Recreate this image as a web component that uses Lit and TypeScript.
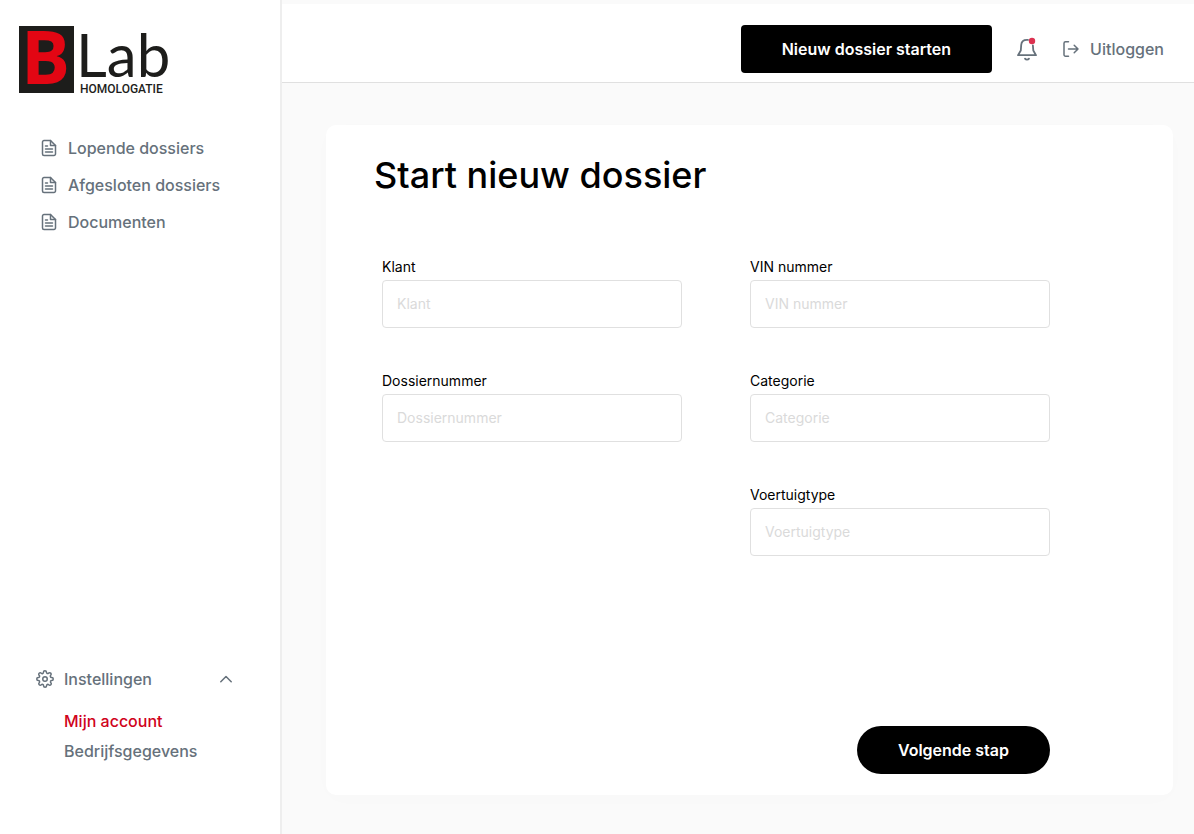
import { LitElement, html, css, svg } from "lit";
import { customElement } from "lit/decorators.js";

const documentIcon = html`<svg class="icon" width="18" height="18" viewBox="0 0 18 18" aria-hidden="true">
  <path d="M10.5 1.5H4A1.5 1.5 0 0 0 2.5 3v12A1.5 1.5 0 0 0 4 16.5h10a1.5 1.5 0 0 0 1.5-1.5V6.5z" />
  <path d="M10.5 1.5V6.5h5M5.500 7h2M5.500 10h7M5.500 13h7" />
</svg>`;

const gearTeeth = svg`<path d="M19.400 15a1.650 1.650 0 0 0 .330 1.820l.060.060a2 2 0 1 1-2.830 2.830l-.060-.060a1.650 1.650 0 0 0-2.800 1.170V21a2 2 0 1 1-4 0v-.090a1.650 1.650 0 0 0-2.900-1.180l-.060.060a2 2 0 1 1-2.830-2.830l.060-.060a1.650 1.650 0 0 0-1.170-2.800H3a2 2 0 1 1 0-4h.090a1.650 1.650 0 0 0 1.180-2.900l-.060-.060a2 2 0 1 1 2.830-2.830l.060.060a1.650 1.650 0 0 0 2.800-1.170V3a2 2 0 1 1 4 0v.090a1.650 1.650 0 0 0 2.800 1.170l.060-.060a2 2 0 1 1 2.830 2.830l-.060.060a1.650 1.650 0 0 0 1.170 2.800H21a2 2 0 1 1 0 4h-.090a1.650 1.650 0 0 0-1.510 1.110z" />`;

const links = ["Lopende dossiers", "Afgesloten dossiers", "Documenten"];

const columns = [
  ["Klant", "Dossiernummer"],
  ["VIN nummer", "Categorie", "Voertuigtype"],
];

@customElement("app-root")
export class AppRoot extends LitElement {
  static styles = css`
    :host {
      display: grid;
      grid-template-columns: 282px minmax(0, 1fr);
      min-height: 100vh;
      background: #fafafa;
      color: #000;
      font-family: Inter, "Liberation Sans", sans-serif;
      font-size: 16px;
      line-height: 24px;
    }
    * {
      box-sizing: border-box;
    }
    a {
      color: inherit;
      text-decoration: none;
    }
    button {
      border: 0;
      padding: 0;
      background: none;
      color: inherit;
      font: inherit;
      cursor: pointer;
    }
    .icon {
      flex: none;
      fill: none;
      stroke: currentColor;
      stroke-width: 1.5;
      stroke-linecap: round;
      stroke-linejoin: round;
    }
    .gear {
      stroke-width: 2;
    }
    .sidebar {
      display: flex;
      flex-direction: column;
      padding: 0 0 71px;
      border-right: 2px solid #eee;
      background: #fff;
      color: #66717b;
      font-weight: 500;
    }
    .logo {
      display: block;
      flex: none;
      overflow: visible;
    }
    .mark {
      font-family: "Open Sans", sans-serif;
      font-size: 73px;
      font-weight: 700;
      fill: #e30613;
    }
    .name {
      font-family: Lato, sans-serif;
      font-size: 60px;
      font-weight: 400;
      fill: #1d1d1b;
    }
    .tagline {
      font-family: Roboto, sans-serif;
      font-size: 12px;
      font-weight: 500;
      fill: #1d1d1b;
    }
    .links {
      display: grid;
      gap: 13px;
      margin-top: 24px;
      padding-left: 40px;
    }
    .link {
      display: flex;
      align-items: center;
      gap: 10px;
    }
    .settings {
      margin-top: auto;
      padding: 0 48px 0 36px;
    }
    .toggle {
      display: flex;
      align-items: center;
      width: 100%;
      gap: 10px;
      font-weight: 500;
    }
    .toggle-text {
      flex: 1;
      text-align: left;
    }
    .sublinks {
      display: grid;
      gap: 6px;
      padding: 18px 0 0 28px;
    }
    .active {
      color: #d0021b;
    }
    .page {
      display: flex;
      flex-direction: column;
    }
    .header {
      display: flex;
      align-items: center;
      justify-content: flex-end;
      height: 83px;
      padding: 12px 30px 0 20px;
      border-top: 4px solid #fafafa;
      border-bottom: 1px solid #e0e0e0;
      background: #fff;
      color: #66717b;
      font-weight: 500;
    }
    .primary {
      height: 48px;
      padding: 0 41px;
      border-radius: 4px;
      background: #000;
      color: #fff;
      font-weight: 600;
    }
    .bell,
    .logout {
      display: flex;
      align-items: center;
    }
    .bell {
      margin: 0 24px;
    }
    .logout {
      gap: 10px;
    }
    .badge {
      fill: #dc3250;
      stroke: none;
    }
    .card {
      flex: 1;
      display: flex;
      flex-direction: column;
      margin: 42px 21px 39px 44px;
      padding: 26px 48px 21px;
      border-radius: 10px;
      background: #fff;
      box-shadow: 0 4px 24px rgba(0, 0, 0, 0.01);
    }
    .title {
      margin: 0;
      font-size: 36px;
      line-height: 48px;
      font-weight: 500;
    }
    .form {
      flex: 1;
      display: flex;
      flex-direction: column;
      max-width: 676px;
      padding: 56px 0 0 8px;
    }
    .columns {
      display: grid;
      grid-template-columns: 1fr 1fr;
      gap: 68px;
    }
    .column {
      display: flex;
      flex-direction: column;
      gap: 41px;
    }
    .field {
      display: grid;
      gap: 1px;
    }
    .label {
      font-size: 14px;
    }
    .input {
      width: 100%;
      height: 48px;
      padding: 0 14px 2px;
      border: 1px solid #e0e0e0;
      border-radius: 4px;
      background: #fff;
      color: #000;
      font: inherit;
      font-size: 14px;
    }
    .input::placeholder {
      color: #dadada;
      opacity: 1;
    }
    .actions {
      display: flex;
      justify-content: flex-end;
      margin-top: auto;
    }
    .round {
      border-radius: 24px;
    }
  `;

  render() {
    return html`
      <aside class="sidebar">
        <svg class="logo" width="200" height="112" viewBox="0 0 200 112" role="img" aria-label="BLab Homologatie">
          <rect x="19" y="26" width="55" height="67" fill="#1d1d1b" />
          <text class="mark" x="21" y="84">B</text>
          <text class="name" x="76" y="77">Lab</text>
          <text class="tagline" x="80" y="93">HOMOLOGATIE</text>
        </svg>
        <nav class="links">
          ${links.map((text) => html`<a class="link" href="#">${documentIcon}<span>${text}</span></a>`)}
        </nav>
        <nav class="settings">
          <button class="toggle" type="button" aria-expanded="true">
            <svg class="icon gear" width="18" height="18" viewBox="0 0 24 24" aria-hidden="true">
              ${gearTeeth}<circle cx="12" cy="12" r="3" />
            </svg>
            <span class="toggle-text">Instellingen</span>
            <svg class="icon" width="12" height="8" viewBox="0 0 12 8" aria-hidden="true"><path d="M.8 6.800 6 1.500l5.200 5.300" /></svg>
          </button>
          <div class="sublinks">
            <a class="active" href="#">Mijn account</a>
            <a href="#">Bedrijfsgegevens</a>
          </div>
        </nav>
      </aside>
      <div class="page">
        <header class="header">
          <button class="primary" type="button">Nieuw dossier starten</button>
          <button class="bell" type="button" aria-label="Meldingen">
            <svg class="icon" width="22" height="24" viewBox="0 0 22 24" aria-hidden="true">
              <path d="M12 2.900h-1C7.500 2.900 5.400 5 5.200 8l-.400 5.500L2 18.200h18l-2.700-4.700-.400-5" stroke-width="1.800" />
              <path d="M9 21.600c1 1.300 3 1.300 4 0" stroke-width="1.800" />
              <circle class="badge" cx="16" cy="4" r="3.200" />
            </svg>
          </button>
          <a class="logout" href="#">
            <svg class="icon" width="18" height="18" viewBox="0 0 18 18" aria-hidden="true">
              <path d="M6.500 1.800H3.500a1.500 1.500 0 0 0-1.500 1.500v11.400a1.500 1.500 0 0 0 1.500 1.500h3M6.500 9h9.500M12.200 5.200 16 9l-3.800 3.800" />
            </svg>
            <span>Uitloggen</span>
          </a>
        </header>
        <main class="card">
          <h1 class="title">Start nieuw dossier</h1>
          <form class="form">
            <div class="columns">
              ${columns.map(
                (fields, c) => html`<div class="column">
                  ${fields.map(
                    (name, i) => html`<div class="field">
                      <label class="label" for="field-${c}-${i}">${name}</label>
                      <input class="input" id="field-${c}-${i}" type="text" placeholder=${name} />
                    </div>`
                  )}
                </div>`
              )}
            </div>
            <div class="actions">
              <button class="primary round" type="button">Volgende stap</button>
            </div>
          </form>
        </main>
      </div>
    `;
  }
}
